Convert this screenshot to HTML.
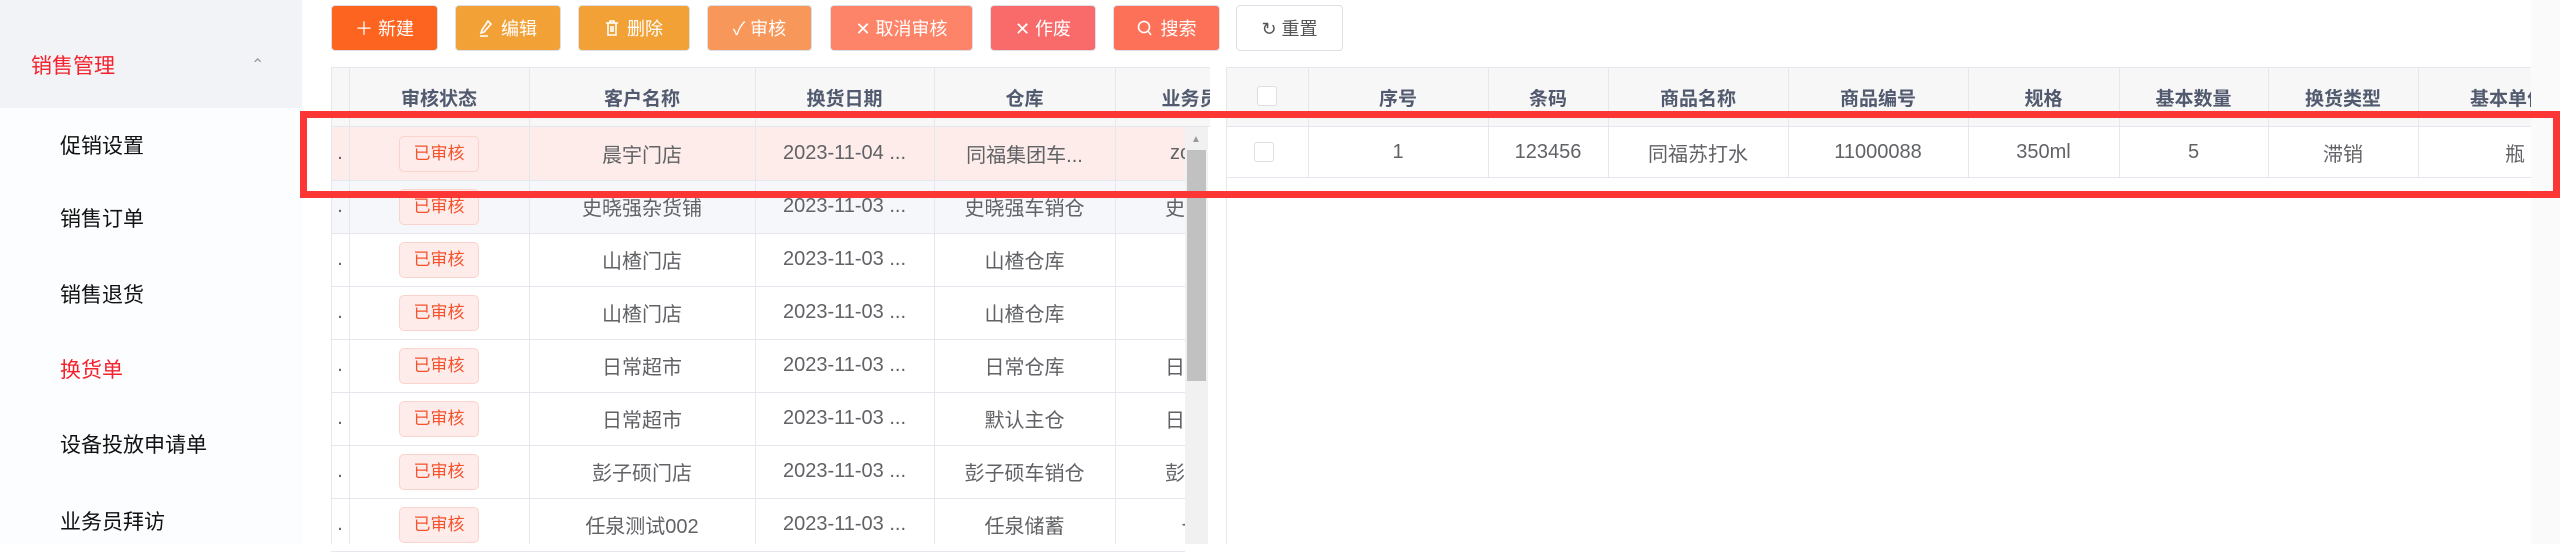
<!DOCTYPE html>
<html><head><meta charset="utf-8"><style>
*{box-sizing:border-box;margin:0;padding:0}
body{width:2560px;height:544px;overflow:hidden;background:#fff;font-family:"Liberation Sans","Noto Sans CJK SC",sans-serif;position:relative}
.a{position:absolute}
.side{left:0;top:0;width:302px;height:544px;background:#fcfdfe}
.menu{position:absolute;left:60px;font-size:21px;color:#111;line-height:30px}
.btn{position:absolute;top:5px;height:46px;border-radius:4px;color:#fff;font-size:18px;display:flex;align-items:center;justify-content:center;gap:8px;border:1px solid #dde0e6}
.cell{position:absolute;display:flex;align-items:center;justify-content:center;font-size:20px;color:#606266;white-space:nowrap;overflow:hidden}
.hd{font-weight:bold;color:#515a6e;font-size:19px}
.vl{position:absolute;width:1px;background:#e4e7ed}
.hl{position:absolute;height:1px;background:#e4e7ed}
.tag{display:inline-block;width:80px;height:36px;line-height:34px;text-align:center;border:1px solid #fbd3cc;background:#fdecea;color:#f5522d;border-radius:5px;font-size:17px}
.cb{position:absolute;width:20px;height:20px;border:1px solid #dcdfe6;border-radius:3px;background:#fff}
</style></head><body>
<div class="a side"></div>
<div class="a" style="left:0;top:0;width:302px;height:108px;background:#f1f3f7"></div>
<div class="menu" style="left:31px;top:52px;color:#f5222d">销售管理</div>
<div class="a" style="left:251px;top:55px;font-size:16px;color:#999">&#8963;</div>
<div class="menu" style="top:132px">促销设置</div>
<div class="menu" style="top:205px">销售订单</div>
<div class="menu" style="top:281px">销售退货</div>
<div class="menu" style="top:356px;color:#f5222d">换货单</div>
<div class="menu" style="top:431px">设备投放申请单</div>
<div class="menu" style="top:508px">业务员拜访</div>

<div class="btn" style="left:331px;width:107px;background:#fd641f">＋ 新建</div>
<div class="btn" style="left:455px;width:106px;background:#f2a136"><svg width="14" height="18" viewBox="0 0 14 18"><path d="M9 2l3 3-7 8-3 1 1-3z M1 17h8" fill="none" stroke="#fff" stroke-width="1.6"/></svg>编辑</div>
<div class="btn" style="left:578px;width:112px;background:#f2a136"><svg width="14" height="18" viewBox="0 0 14 18"><path d="M1 4h12M5 4V2h4v2M3 4v12h8V4M6 7v6M8 7v6" fill="none" stroke="#fff" stroke-width="1.6"/></svg>删除</div>
<div class="btn" style="left:707px;width:105px;background:#f7985a">✓ 审核</div>
<div class="btn" style="left:830px;width:143px;background:#fd8468">✕ 取消审核</div>
<div class="btn" style="left:990px;width:106px;background:#f96b6b">✕ 作废</div>
<div class="btn" style="left:1113px;width:107px;background:#fd7158"><svg width="16" height="18" viewBox="0 0 16 18"><circle cx="7" cy="8" r="5.5" fill="none" stroke="#fff" stroke-width="1.6"/><path d="M11 12l3 4" stroke="#fff" stroke-width="1.6"/></svg>搜索</div>
<div class="btn" style="left:1236px;width:107px;background:#fff;color:#555">↻ 重置</div>

<div class="a" style="left:331px;top:67px;width:879px;height:60px;background:#f7f7f7;border-top:1px solid #e4e7ed;border-bottom:1px solid #e4e7ed"></div>
<div class="a" style="left:331px;top:127px;width:854px;height:53px;background:#fdecea"></div>
<div class="a" style="left:331px;top:180px;width:854px;height:53px;background:#f5f7fa"></div>
<div class="a" style="left:1185px;top:127px;width:23px;height:417px;background:#f1f1f1"></div>
<div class="a" style="left:1187px;top:150px;width:19px;height:231px;background:#c1c1c1"></div>
<div class="a" style="left:1191px;top:134px;font-size:10px;color:#999">▲</div>
<div class="vl" style="left:331px;top:67px;height:477px"></div>
<div class="vl" style="left:349px;top:67px;height:477px"></div>
<div class="vl" style="left:529px;top:67px;height:477px"></div>
<div class="vl" style="left:755px;top:67px;height:477px"></div>
<div class="vl" style="left:934px;top:67px;height:477px"></div>
<div class="vl" style="left:1115px;top:67px;height:477px"></div>
<div class="cell hd" style="left:349px;top:67px;width:180px;height:60px">审核状态</div>
<div class="cell hd" style="left:529px;top:67px;width:226px;height:60px">客户名称</div>
<div class="cell hd" style="left:755px;top:67px;width:179px;height:60px">换货日期</div>
<div class="cell hd" style="left:934px;top:67px;width:181px;height:60px">仓库</div>
<div class="a" style="left:1115px;top:67px;width:95px;height:60px;overflow:hidden"><div class="cell hd" style="left:0;top:0;width:150px;height:60px">业务员</div></div>

<div id="rows"></div>
<script>
var d=[["晨宇门店","2023-11-04 ...","同福集团车...","zcy"],["史晓强杂货铺","2023-11-03 ...","史晓强车销仓","史晓"],["山楂门店","2023-11-03 ...","山楂仓库",""],["山楂门店","2023-11-03 ...","山楂仓库",""],["日常超市","2023-11-03 ...","日常仓库","日常"],["日常超市","2023-11-03 ...","默认主仓","日常"],["彭子硕门店","2023-11-03 ...","彭子硕车销仓","彭子"],["任泉测试002","2023-11-03 ...","任泉储蓄","-"]];
var h="";
d.forEach(function(r,i){var t=127+i*53;
h+='<div class="hl" style="left:331px;top:'+(t+53)+'px;width:854px"></div>';
h+='<div class="cell" style="left:331px;top:'+t+'px;width:18px;height:53px">.</div>';
h+='<div class="cell" style="left:349px;top:'+t+'px;width:180px;height:53px"><span class="tag">已审核</span></div>';
h+='<div class="cell" style="left:529px;top:'+t+'px;width:226px;height:53px">'+r[0]+'</div>';
h+='<div class="cell" style="left:755px;top:'+t+'px;width:179px;height:53px">'+r[1]+'</div>';
h+='<div class="cell" style="left:934px;top:'+t+'px;width:181px;height:53px">'+r[2]+'</div>';
h+='<div class="a" style="left:1115px;top:'+t+'px;width:70px;height:53px;overflow:hidden"><div class="cell" style="left:0;top:0;width:140px;height:53px">'+r[3]+'</div></div>';
});
document.getElementById("rows").innerHTML=h;
</script>

<div class="a" style="left:2531px;top:0;width:29px;height:544px;background:#fafafa"></div>
<div class="a" style="left:1226px;top:67px;width:1305px;height:60px;background:#f7f7f7;border-top:1px solid #e4e7ed;border-bottom:1px solid #e4e7ed"></div>
<div class="vl" style="left:1226px;top:67px;height:477px"></div>
<div class="hl" style="left:1226px;top:177px;width:1305px"></div>
<div class="vl" style="left:1308px;top:67px;height:110px"></div>
<div class="vl" style="left:1488px;top:67px;height:110px"></div>
<div class="vl" style="left:1608px;top:67px;height:110px"></div>
<div class="vl" style="left:1788px;top:67px;height:110px"></div>
<div class="vl" style="left:1968px;top:67px;height:110px"></div>
<div class="vl" style="left:2119px;top:67px;height:110px"></div>
<div class="vl" style="left:2268px;top:67px;height:110px"></div>
<div class="vl" style="left:2418px;top:67px;height:110px"></div>
<div class="cb" style="left:1257px;top:86px"></div>
<div class="cb" style="left:1254px;top:142px"></div>
<div class="cell hd" style="left:1308px;top:67px;width:180px;height:60px">序号</div>
<div class="cell hd" style="left:1488px;top:67px;width:120px;height:60px">条码</div>
<div class="cell hd" style="left:1608px;top:67px;width:180px;height:60px">商品名称</div>
<div class="cell hd" style="left:1788px;top:67px;width:180px;height:60px">商品编号</div>
<div class="cell hd" style="left:1968px;top:67px;width:151px;height:60px">规格</div>
<div class="cell hd" style="left:2119px;top:67px;width:149px;height:60px">基本数量</div>
<div class="cell hd" style="left:2268px;top:67px;width:150px;height:60px">换货类型</div>
<div class="a" style="left:2418px;top:67px;width:113px;height:60px;overflow:hidden"><div class="a hd" style="left:52px;top:17px;white-space:nowrap">基本单位</div></div>
<div class="cell" style="left:1308px;top:127px;width:180px;height:50px">1</div>
<div class="cell" style="left:1488px;top:127px;width:120px;height:50px">123456</div>
<div class="cell" style="left:1608px;top:127px;width:180px;height:50px">同福苏打水</div>
<div class="cell" style="left:1788px;top:127px;width:180px;height:50px">11000088</div>
<div class="cell" style="left:1968px;top:127px;width:151px;height:50px">350ml</div>
<div class="cell" style="left:2119px;top:127px;width:149px;height:50px">5</div>
<div class="cell" style="left:2268px;top:127px;width:150px;height:50px">滞销</div>
<div class="cell" style="left:2418px;top:127px;width:113px;height:50px;justify-content:flex-end;padding-right:6px">瓶</div>

<div class="a" style="left:300px;top:111px;width:2260px;height:87px;border:7px solid #fc3535"></div>
</body></html>
